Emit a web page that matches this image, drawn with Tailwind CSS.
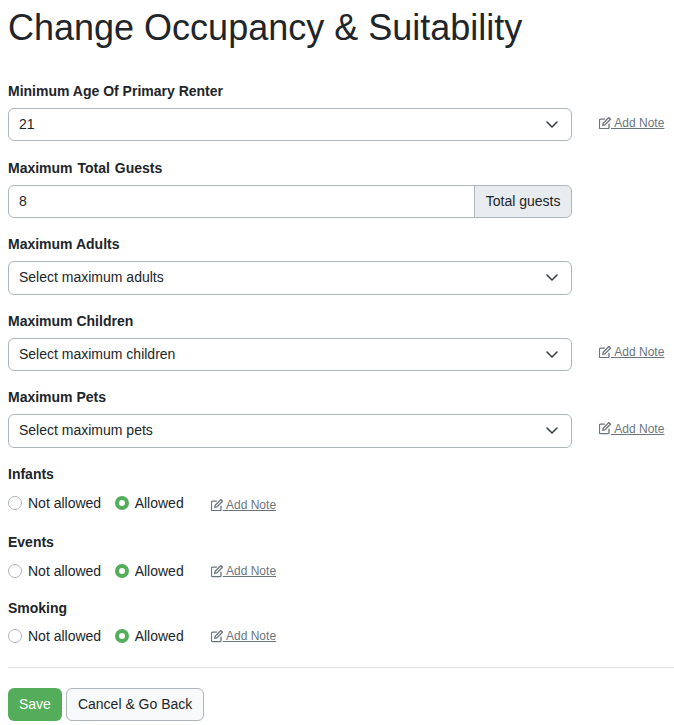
<!DOCTYPE html>
<html lang="en">
<head>
    <meta charset="UTF-8">
    <title>Change Occupancy &amp; Suitability</title>
    <script src="https://cdn.jsdelivr.net/npm/@tailwindcss/browser@4"></script>
</head>
<body class="bg-white text-[#212529] font-['Liberation_Sans',Arial,sans-serif] text-[14px] leading-[21px]">

<main class="pl-2 pt-[6px] h-[725px] overflow-hidden">
    <h1 class="text-[36px] leading-[43px] font-normal h-[74.9px]">Change Occupancy &amp; Suitability</h1>

    <!-- select and number fields -->
    <div class="h-[76.6px]">
        <label class="block font-bold mb-[6.1px]">Minimum Age Of Primary Renter</label>
        <div class="flex items-center">
            <div class="relative w-[564px]">
                <select class="block w-full h-[33.5px] pl-[10px] border border-[#adb5bd] rounded-[6px] bg-white appearance-none">
                    <option>21</option>
                </select>
                <svg class="absolute right-[12px] top-[11px] w-[16px] h-[12px]" viewBox="0 0 16 12" fill="none" stroke="#343a40" stroke-width="1.5" stroke-linecap="round" stroke-linejoin="round"><path d="m3 3 5 5 5-5"/></svg>
            </div>
            <a href="#" class="flex items-center ml-[27px] -mt-[3px] text-[12px] text-[#6c757d] leading-[18px]">
                <svg class="w-[12.5px] h-[12.5px]" viewBox="1 0.500 15 15" fill="none" stroke="#6c757d" stroke-width="1.6"><path d="M8 3H3a1.5 1.5 0 0 0-1.5 1.5v8.500A1.500 1.500 0 0 0 3 14.500h8.500A1.500 1.500 0 0 0 13 13V8.500"/><path d="M6 8 12.800 1.200l2 2L8 10l-2.400.4z"/></svg>
                <span class="underline -ml-[0.5px]">&nbsp;Add Note</span>
            </a>
        </div>
    </div>

    <div class="h-[76.6px]">
        <label class="block font-bold pt-[0.5px] mb-[5.6px] [word-spacing:1px]">Maximum Total Guests</label>
        <div class="flex w-[564px] h-[33.5px]">
            <input type="text" value="8" class="flex-1 min-w-0 pl-[10px] border border-[#adb5bd] rounded-l-[6px] bg-white">
            <span class="flex items-center px-[10.5px] -ml-px border border-[#adb5bd] rounded-r-[6px] bg-[#e9ecef]">Total guests</span>
        </div>
    </div>

    <div class="h-[76.6px]">
        <label class="block font-bold mb-[6.1px]">Maximum Adults</label>
        <div class="relative w-[564px]">
            <select class="block w-full h-[33.5px] pl-[10px] border border-[#adb5bd] rounded-[6px] bg-white appearance-none">
                <option>Select maximum adults</option>
            </select>
            <svg class="absolute right-[12px] top-[11px] w-[16px] h-[12px]" viewBox="0 0 16 12" fill="none" stroke="#343a40" stroke-width="1.5" stroke-linecap="round" stroke-linejoin="round"><path d="m3 3 5 5 5-5"/></svg>
        </div>
    </div>

    <div class="h-[76.6px]">
        <label class="block font-bold mb-[6.1px]">Maximum Children</label>
        <div class="flex items-center">
            <div class="relative w-[564px]">
                <select class="block w-full h-[33.5px] pl-[10px] border border-[#adb5bd] rounded-[6px] bg-white appearance-none">
                    <option>Select maximum children</option>
                </select>
                <svg class="absolute right-[12px] top-[11px] w-[16px] h-[12px]" viewBox="0 0 16 12" fill="none" stroke="#343a40" stroke-width="1.5" stroke-linecap="round" stroke-linejoin="round"><path d="m3 3 5 5 5-5"/></svg>
            </div>
            <a href="#" class="flex items-center ml-[27px] -mt-[5px] text-[12px] text-[#6c757d] leading-[18px]">
                <svg class="w-[12.5px] h-[12.5px]" viewBox="1 0.500 15 15" fill="none" stroke="#6c757d" stroke-width="1.6"><path d="M8 3H3a1.5 1.5 0 0 0-1.5 1.5v8.500A1.500 1.500 0 0 0 3 14.500h8.500A1.500 1.500 0 0 0 13 13V8.500"/><path d="M6 8 12.800 1.200l2 2L8 10l-2.400.4z"/></svg>
                <span class="underline -ml-[0.5px]">&nbsp;Add Note</span>
            </a>
        </div>
    </div>

    <div class="h-[76.6px]">
        <label class="block font-bold mb-[6.1px]">Maximum Pets</label>
        <div class="flex items-center">
            <div class="relative w-[564px]">
                <select class="block w-full h-[33.5px] pl-[10px] pb-[1px] border border-[#adb5bd] rounded-[6px] bg-white appearance-none">
                    <option>Select maximum pets</option>
                </select>
                <svg class="absolute right-[12px] top-[11px] w-[16px] h-[12px]" viewBox="0 0 16 12" fill="none" stroke="#343a40" stroke-width="1.5" stroke-linecap="round" stroke-linejoin="round"><path d="m3 3 5 5 5-5"/></svg>
            </div>
            <a href="#" class="flex items-center ml-[27px] -mt-[5px] text-[12px] text-[#6c757d] leading-[18px]">
                <svg class="w-[12.5px] h-[12.5px]" viewBox="1 0.500 15 15" fill="none" stroke="#6c757d" stroke-width="1.6"><path d="M8 3H3a1.5 1.5 0 0 0-1.5 1.5v8.500A1.500 1.500 0 0 0 3 14.500h8.500A1.500 1.500 0 0 0 13 13V8.500"/><path d="M6 8 12.800 1.200l2 2L8 10l-2.400.4z"/></svg>
                <span class="underline -ml-[0.5px]">&nbsp;Add Note</span>
            </a>
        </div>
    </div>

    <!-- radio rows -->
    <div class="h-[68px]">
        <label class="block font-bold mb-[8px]">Infants</label>
        <div class="flex items-center h-[21px]">
            <span class="w-[14px] h-[14px] rounded-full border border-[#adb5bd] bg-white"></span>
            <span class="ml-[6px]">Not allowed</span>
            <span class="w-[14px] h-[14px] ml-[14px] rounded-full border-[4px] border-[#54ad5a] bg-white"></span>
            <span class="ml-[5.5px]">Allowed</span>
            <a href="#" class="flex items-center ml-[27px] mt-[3px] text-[12px] text-[#6c757d] leading-[18px]">
                <svg class="w-[12.5px] h-[12.5px]" viewBox="1 0.500 15 15" fill="none" stroke="#6c757d" stroke-width="1.6"><path d="M8 3H3a1.5 1.5 0 0 0-1.5 1.5v8.500A1.500 1.500 0 0 0 3 14.500h8.500A1.500 1.500 0 0 0 13 13V8.500"/><path d="M6 8 12.800 1.200l2 2L8 10l-2.400.4z"/></svg>
                <span class="underline -ml-[0.5px]">&nbsp;Add Note</span>
            </a>
        </div>
    </div>

    <div class="h-[66px]">
        <label class="block font-bold mb-[8px]">Events</label>
        <div class="flex items-center h-[21px]">
            <span class="w-[14px] h-[14px] rounded-full border border-[#adb5bd] bg-white"></span>
            <span class="ml-[6px]">Not allowed</span>
            <span class="w-[14px] h-[14px] ml-[14px] rounded-full border-[4px] border-[#54ad5a] bg-white"></span>
            <span class="ml-[5.5px]">Allowed</span>
            <a href="#" class="flex items-center ml-[27px] text-[12px] text-[#6c757d] leading-[18px]">
                <svg class="w-[12.5px] h-[12.5px]" viewBox="1 0.500 15 15" fill="none" stroke="#6c757d" stroke-width="1.6"><path d="M8 3H3a1.5 1.5 0 0 0-1.5 1.5v8.500A1.500 1.500 0 0 0 3 14.500h8.500A1.500 1.500 0 0 0 13 13V8.500"/><path d="M6 8 12.800 1.200l2 2L8 10l-2.400.4z"/></svg>
                <span class="underline -ml-[0.5px]">&nbsp;Add Note</span>
            </a>
        </div>
    </div>

    <div>
        <label class="block font-bold mb-[7px]">Smoking</label>
        <div class="flex items-center h-[21px]">
            <span class="w-[14px] h-[14px] rounded-full border border-[#adb5bd] bg-white"></span>
            <span class="ml-[6px]">Not allowed</span>
            <span class="w-[14px] h-[14px] ml-[14px] rounded-full border-[4px] border-[#54ad5a] bg-white"></span>
            <span class="ml-[5.5px]">Allowed</span>
            <a href="#" class="flex items-center ml-[27px] text-[12px] text-[#6c757d] leading-[18px]">
                <svg class="w-[12.5px] h-[12.5px]" viewBox="1 0.500 15 15" fill="none" stroke="#6c757d" stroke-width="1.6"><path d="M8 3H3a1.5 1.5 0 0 0-1.5 1.5v8.500A1.500 1.500 0 0 0 3 14.500h8.500A1.500 1.500 0 0 0 13 13V8.500"/><path d="M6 8 12.800 1.200l2 2L8 10l-2.400.4z"/></svg>
                <span class="underline -ml-[0.5px]">&nbsp;Add Note</span>
            </a>
        </div>
    </div>

    <hr class="mt-[20px] border-t border-[#dee2e6]">

    <div class="flex gap-1 mt-[20px]">
        <button class="h-[33.5px] px-[11px] rounded-[6px] bg-[#54ad5a] text-white">Save</button>
        <button class="h-[33.5px] px-[11px] rounded-[6px] border border-[#adb5bd] bg-[#f8f9fa]">Cancel &amp; Go Back</button>
    </div>
</main>
</body>
</html>
